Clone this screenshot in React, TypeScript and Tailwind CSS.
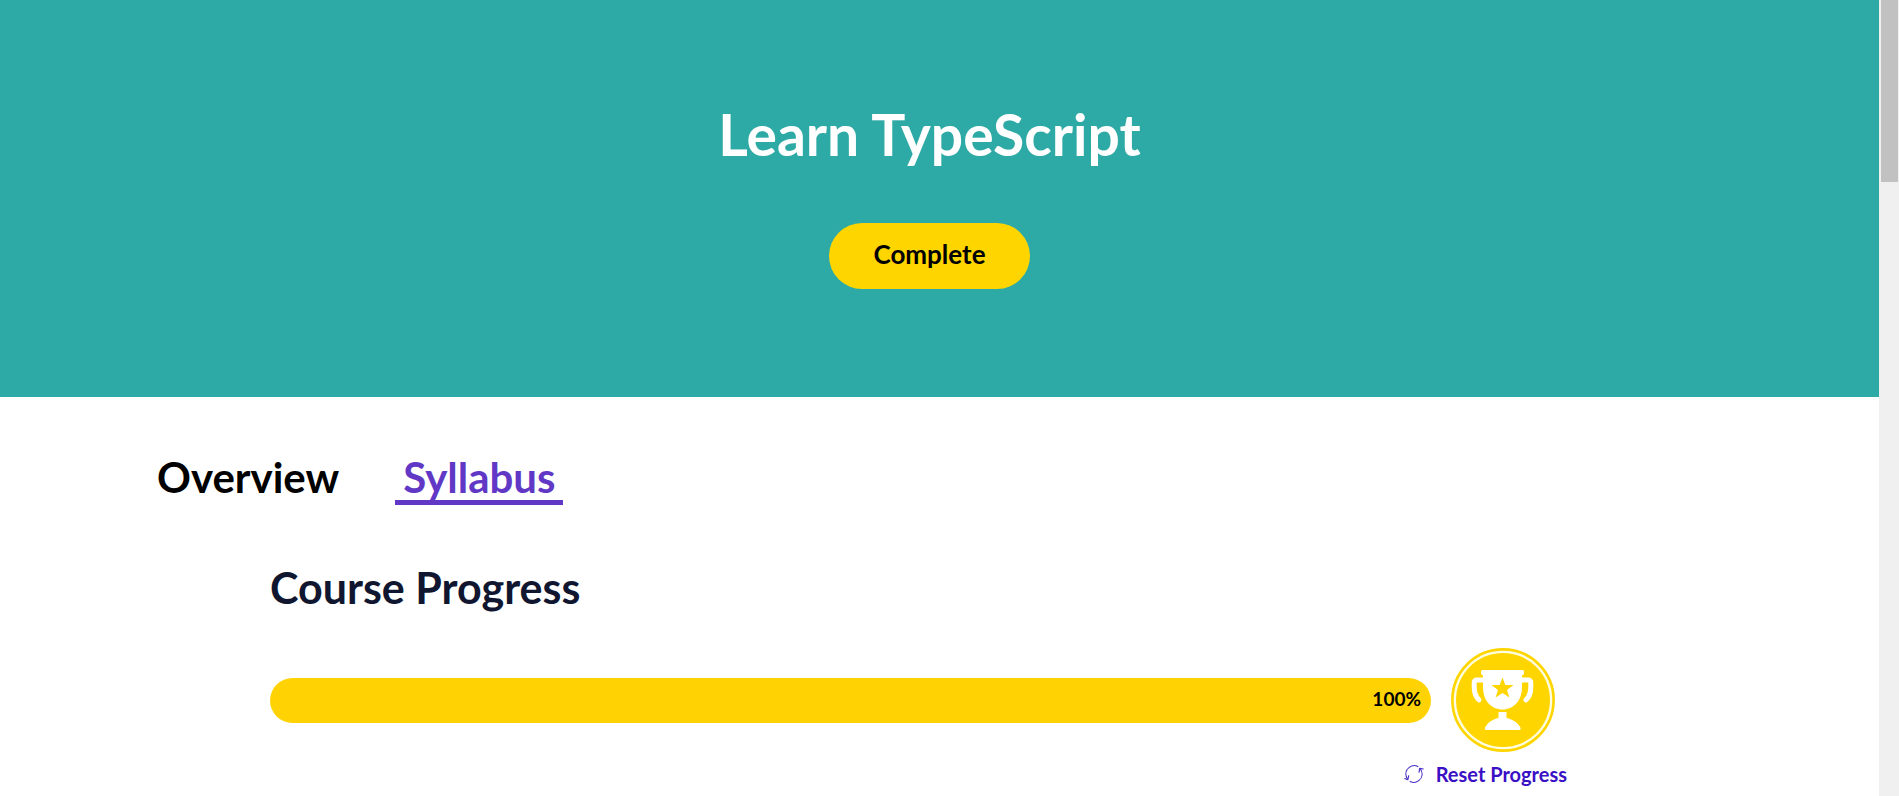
function TrophyBadge() {
  return (
    <svg viewBox="0 0 104 104" className="size-26 shrink-0" role="img" aria-label="Trophy">
      <circle cx="52" cy="52" r="50.6" fill="#fffde0" stroke="#ffd500" strokeWidth="2.6" />
      <circle cx="52" cy="52" r="47" fill="#ffd500" />
      <g fill="none" stroke="#fff" strokeWidth="5" strokeLinecap="round" strokeLinejoin="round">
        <path d="M34 32H26Q23.2 32 23.2 35V39C23.2 45 24.6 48.8 28 51.8" />
        <path d="M69 32H77Q79.8 32 79.8 35V39C79.8 45 78.4 48.8 75 51.8" />
      </g>
      <path
        fill="#fff"
        d="M31.500 22H71.500Q73 22 73 23.500V25Q73 27 71 27.500V39C71 53 62.500 61.500 51.500 61.500S32 53 32 39V27.500Q30 27 30 25V23.500Q30 22 31.500 22Z"
      />
      <path
        fill="#ffd500"
        d="M51.500 29.500L54.300 37.100H62.500L56 42.100L58.400 49.500L51.500 45L44.600 49.500L47 42.100L40.500 37.100H48.700Z"
      />
      <path
        fill="#fff"
        d="M47.500 64H55.500V70C62 71.300 67 75 69.300 79.300Q70.500 82 68 82H35.500Q33 82 34.200 79.300C36.500 75 41 71.300 47.500 70Z"
      />
    </svg>
  );
}

function ResetIcon() {
  return (
    <svg
      viewBox="0 0 21 20"
      className="h-5 w-5"
      fill="none"
      stroke="#4a2cc4"
      strokeWidth="1.2"
      strokeLinecap="round"
      strokeLinejoin="round"
      aria-hidden="true"
    >
      <path d="M3.700 15.500C1 11 1.500 6 5.500 3C8.500 .8 12 .8 14.500 2.200" />
      <path d="M.8 14.800L4 16L5 11.800" />
      <path d="M17.200 4.500C20 9 19.500 14 15.500 17C12.500 19.200 9 19.200 6.500 17.800" />
      <path d="M20.200 4.700L16.500 4L15.800 8" />
    </svg>
  );
}

export default function App() {
  return (
    <div className="flex min-h-screen bg-white font-['Lato','Open_Sans',sans-serif] text-black">
      <div className="min-w-0 flex-1">
        <header className="flex flex-col items-center bg-[#2eaaa6] pt-[102px] pr-5 pb-[108px]">
          <h1 className="text-[57px] leading-[64px] font-bold text-white">Learn TypeScript</h1>
          <button
            type="button"
            className="mt-[57px] h-[66px] rounded-full bg-[#ffd500] px-11 pb-1 text-[26px] leading-8 font-bold"
          >
            Complete
          </button>
        </header>

        <main>
          <nav className="flex gap-12 pt-[57px] pl-[149px] text-[42px] leading-[46px] font-bold">
            <a href="#overview" className="border-b-[5px] border-transparent px-2">
              Overview
            </a>
            <a
              href="#syllabus"
              aria-current="page"
              className="border-b-[5px] border-[#6138c6] px-2 text-[#6138c6]"
            >
              Syllabus
            </a>
          </nav>

          <section className="pt-[59px] pr-[312px] pl-[270px]">
            <h2 className="text-[43px] leading-[48px] font-bold text-[#10162f]">Course Progress</h2>
            <div className="mt-9 flex items-center gap-5 pr-3">
              <div
                role="progressbar"
                aria-label="Course progress"
                aria-valuenow={100}
                aria-valuemin={0}
                aria-valuemax={100}
                className="flex h-[45px] flex-1 items-center justify-end rounded-full bg-[#ffd303] pr-[10px] pb-0.5 text-[19px] leading-6 font-bold"
              >
                100%
              </div>
              <TrophyBadge />
            </div>
            <div className="flex justify-end pt-[10px]">
              <button
                type="button"
                className="flex items-center gap-3 text-[20px] leading-6 font-bold text-[#3a10c5]"
              >
                <ResetIcon />
                Reset Progress
              </button>
            </div>
          </section>
        </main>
      </div>

      <div aria-hidden="true" className="w-5 shrink-0 bg-[#f0f0f0] pr-px pl-0.5">
        <div className="h-[182px] bg-[#c1c1c1]" />
      </div>
    </div>
  );
}
